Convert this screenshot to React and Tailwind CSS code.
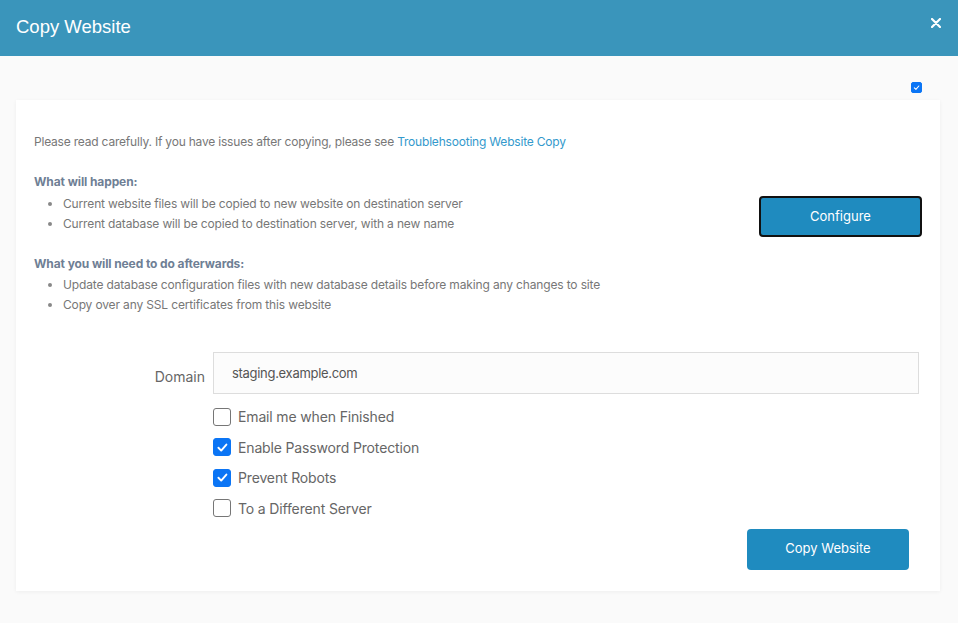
import { useState } from "react";

function CheckBox({ checked, onChange, size = "lg" }) {
  const box = size === "lg" ? "w-[18px] h-[18px] rounded-[3px]" : "w-[11px] h-[11px] rounded-[2px]";
  return (
    <button
      type="button"
      onClick={onChange}
      className={`${box} flex items-center justify-center shrink-0 ${
        checked ? "bg-[#0b75f5] border border-[#0b75f5]" : "bg-white border border-[#767676]"
      }`}
    >
      {checked && (
        <svg viewBox="0 0 16 16" className="w-[80%] h-[80%]">
          <path d="M3 8.5 L6.5 12 L13 4.5" fill="none" stroke="white" strokeWidth="2.4" strokeLinecap="round" strokeLinejoin="round" />
        </svg>
      )}
    </button>
  );
}

export default function App() {
  const [domain, setDomain] = useState("staging.example.com");
  const [advanced, setAdvanced] = useState(true);
  const [opts, setOpts] = useState({
    email: false,
    password: true,
    robots: true,
    server: false,
  });

  const toggle = (k) => setOpts({ ...opts, [k]: !opts[k] });

  const options = [
    ["email", "Email me when Finished"],
    ["password", "Enable Password Protection"],
    ["robots", "Prevent Robots"],
    ["server", "To a Different Server"],
  ];

  return (
    <div className="w-[958px] h-[623px] bg-[#fafafa] font-['Inter',sans-serif]">
      {/* ====== Header ====== */}
      <div className="h-[56px] bg-[#3a95bb] flex items-center justify-between pl-4 pr-[16px]">
        <h1 className="text-white text-[18.5px] font-['Liberation_Sans',Arial,sans-serif] pb-[2px]">
          Copy Website
        </h1>
        <button className="text-white -mt-[10px] mr-[1px]">
          <svg viewBox="0 0 10 10" className="w-[10px] h-[10px]">
            <path d="M1 1 L9 9 M9 1 L1 9" stroke="white" strokeWidth="2.2" strokeLinecap="round" />
          </svg>
        </button>
      </div>

      {/* ====== Body ====== */}
      <div className="pl-4 pr-[18px]">
        <div className="flex justify-end pt-[26px] pr-[18px] pb-[7px]">
          <CheckBox size="sm" checked={advanced} onChange={() => setAdvanced(!advanced)} />
        </div>

        <div className="bg-white shadow-[0_1px_4px_rgba(0,0,0,0.05)] h-[491px] pl-[18px] pr-[18px] pt-[33px]">
          <p className="text-[12px] text-[#777] leading-[18px] tracking-[-0.2px]">
            Please read carefully. If you have issues after copying, please see{" "}
            <a href="#" className="text-[#3399cc]">Troublehsooting Website Copy</a>
          </p>

          <div className="flex items-start">
            <div className="flex-1">
              <h6 className="mt-[22px] mb-[2.5px] text-[12px] font-bold text-[#6f7f95] leading-[18px] tracking-[-0.1px]">
                What will happen:
              </h6>
              <ul className="list-disc pl-[29px] text-[12px] text-[#777] leading-[20px] tracking-[-0.15px] marker:text-[#888]">
                <li>Current website files will be copied to new website on destination server</li>
                <li>Current database will be copied to destination server, with a new name</li>
              </ul>

              <h6 className="mt-[21px] mb-[2.5px] text-[12px] font-bold text-[#6f7f95] leading-[18px] tracking-[-0.1px]">
                What you will need to do afterwards:
              </h6>
              <ul className="list-disc pl-[29px] text-[12px] text-[#777] leading-[20px] tracking-[-0.15px] marker:text-[#888]">
                <li>Update database configuration files with new database details before making any changes to site</li>
                <li>Copy over any SSL certificates from this website</li>
              </ul>
            </div>
            <button className="w-[163px] h-[41px] mt-[45px] rounded-[4px] border-2 border-[#111] bg-[#1f8bbf] text-white text-[13px]">
              Configure
            </button>
          </div>

          {/* ====== Form ====== */}
          <div className="mt-[37px] flex items-center gap-[8px]">
            <label className="w-[171px] text-right text-[14px] text-[#666] pt-[6px]">Domain</label>
            <input
              value={domain}
              onChange={(e) => setDomain(e.target.value)}
              className="flex-1 mr-[3px] h-[42px] bg-[#fcfcfc] border border-[#dddddd] px-[18px] text-[13px] tracking-[-0.3px] text-[#555] outline-none"
            />
          </div>

          <div className="ml-[179px] mt-[13px] flex flex-col gap-[11.5px]">
            {options.map(([k, label]) => (
              <label key={k} className="flex items-center gap-[7px] h-[19px] text-[14px] tracking-[-0.15px] text-[#666] cursor-pointer">
                <CheckBox checked={opts[k]} onChange={() => toggle(k)} />
                <span>{label}</span>
              </label>
            ))}
          </div>

          <div className="flex justify-end mt-[11px] pr-[13px]">
            <button className="w-[162px] h-[41px] rounded-[4px] bg-[#1f8bbf] text-white text-[13px]">
              Copy Website
            </button>
          </div>
        </div>
      </div>
    </div>
  );
}
